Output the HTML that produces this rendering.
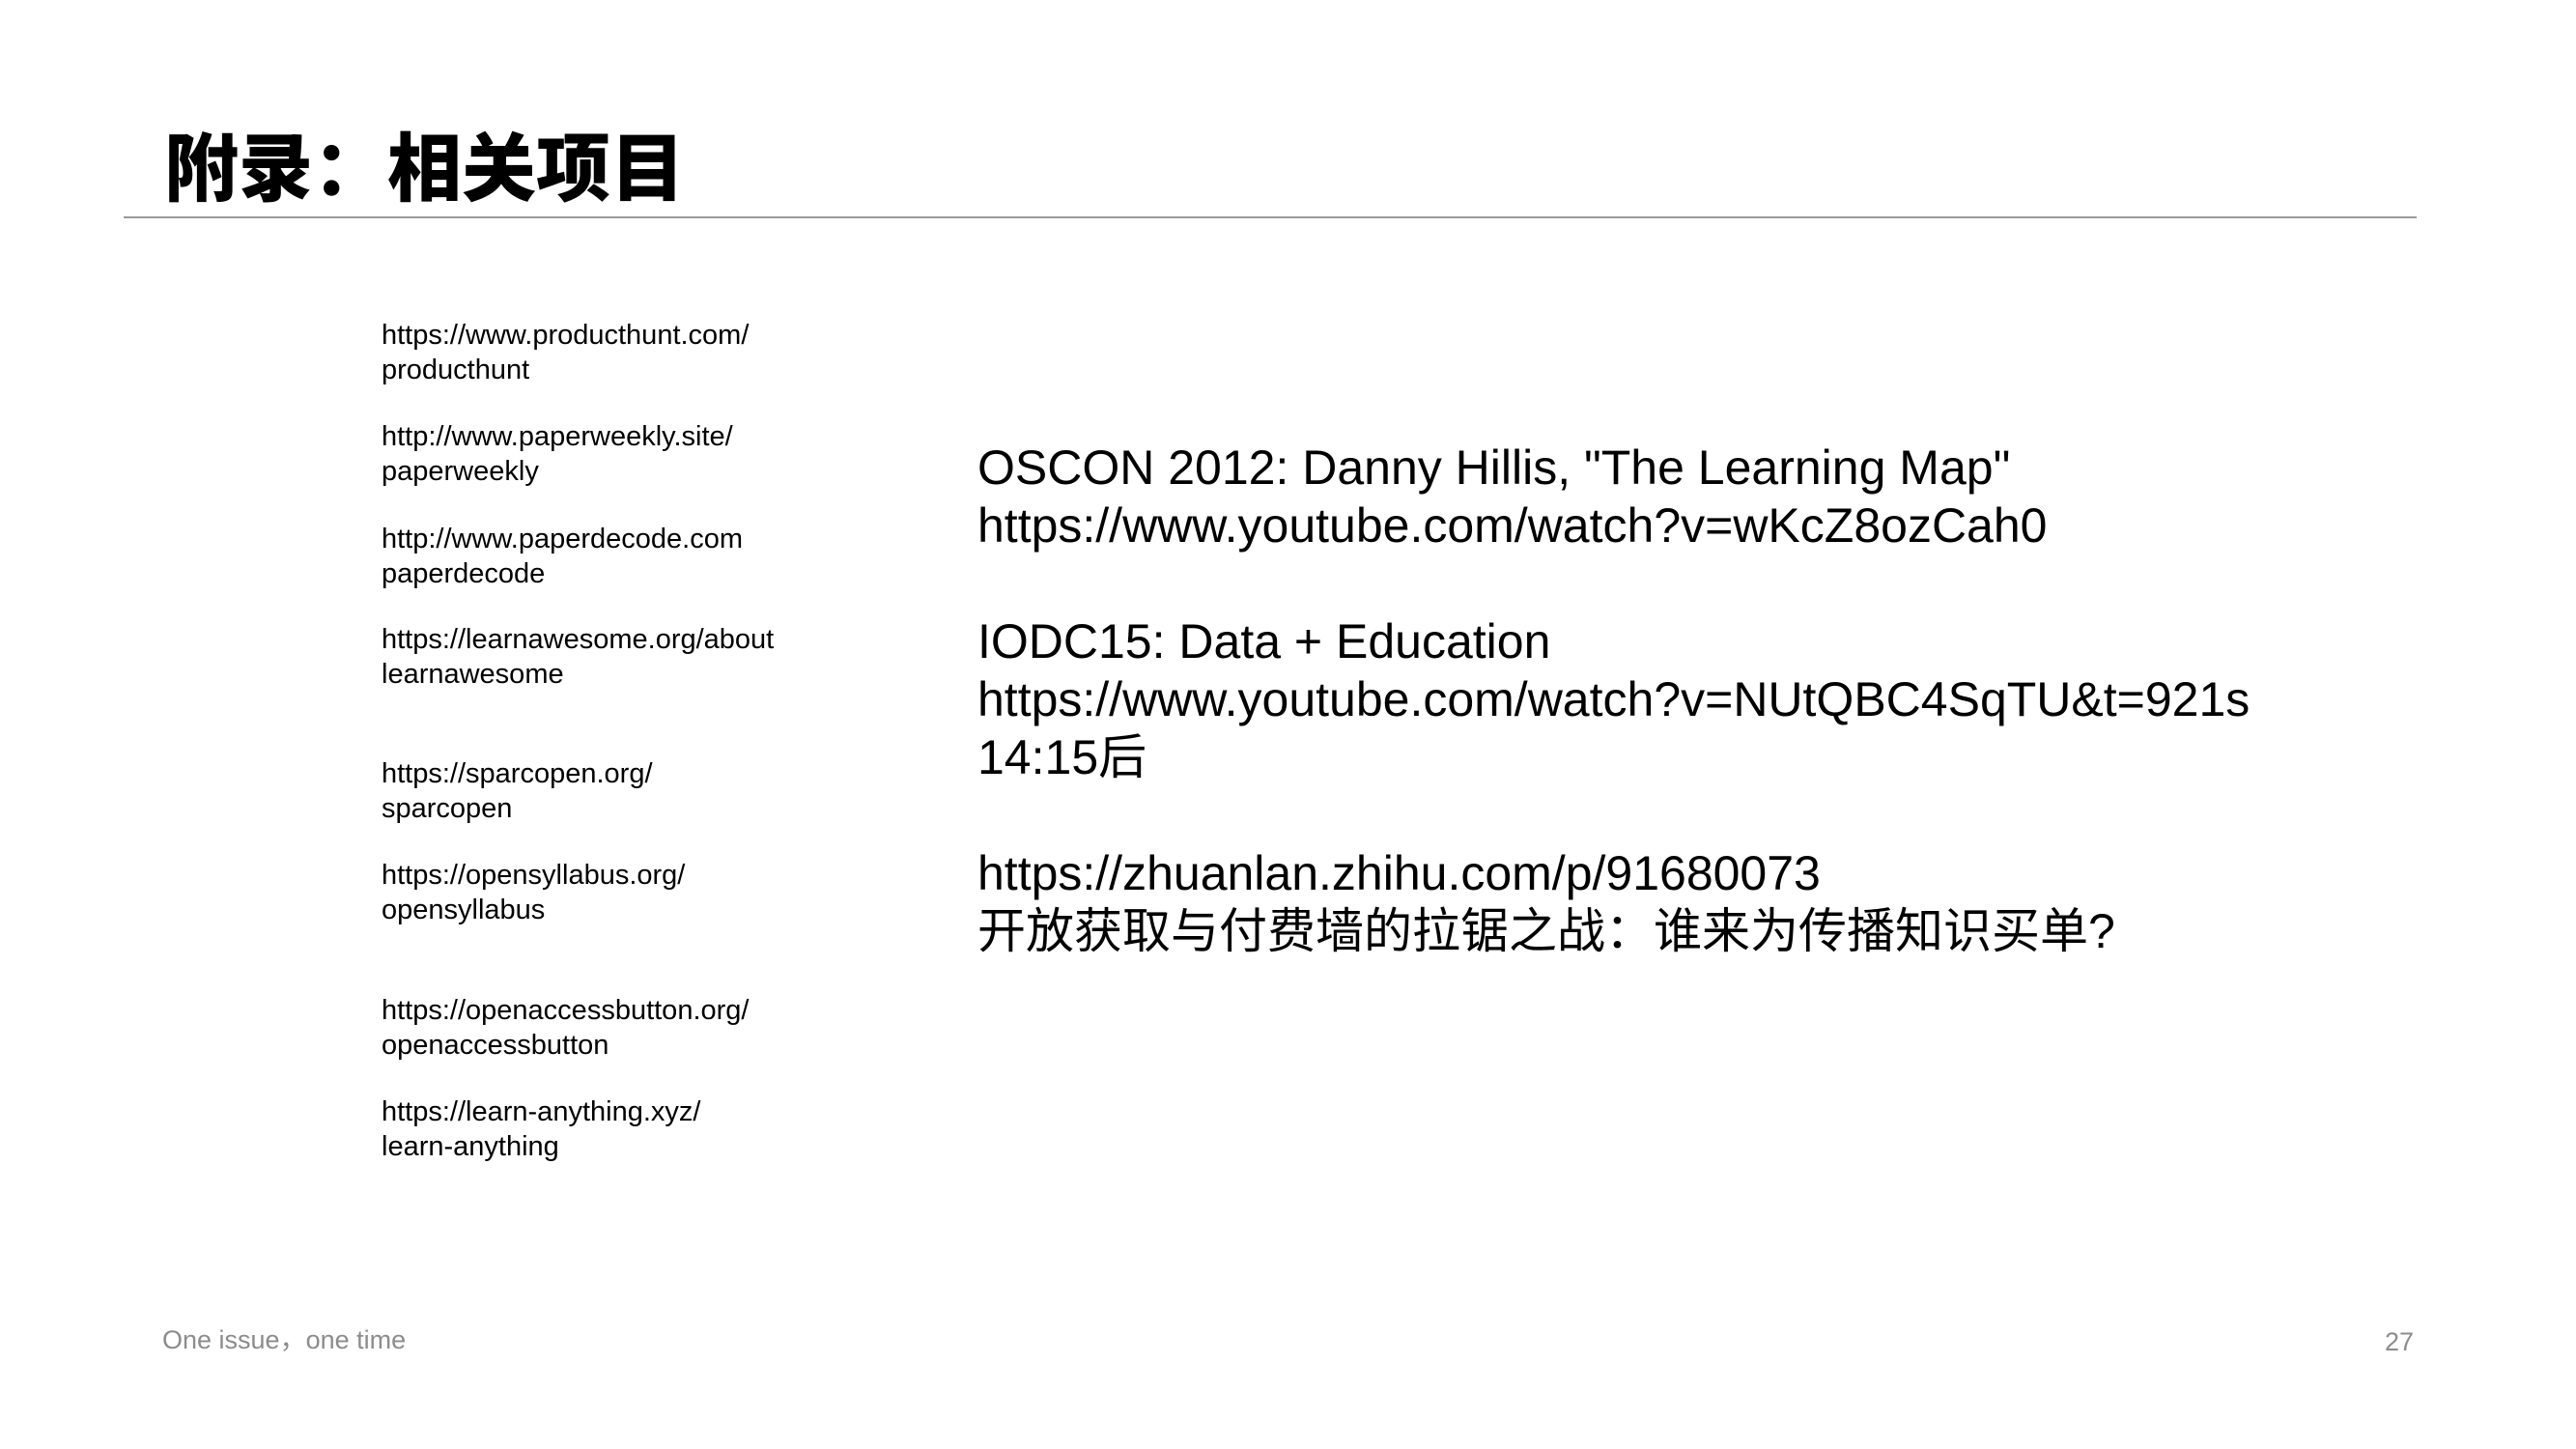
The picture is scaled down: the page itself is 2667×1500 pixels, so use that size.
<!DOCTYPE html>
<html><head><meta charset="utf-8"><style>
html,body{margin:0;padding:0;background:#fff;}
body{width:2667px;height:1500px;position:relative;overflow:hidden;font-family:"Liberation Sans","Noto Sans CJK SC",sans-serif;color:#000;}
.a{position:absolute;white-space:nowrap;}
.title{left:170px;top:124px;font-size:77px;line-height:92px;font-weight:900;font-family:"Noto Sans CJK SC","Liberation Sans",sans-serif;}
.rule{position:absolute;left:128px;top:224px;width:2374px;height:2px;background:#999;}
.l{left:395px;font-size:29px;line-height:36px;}
.r{left:1012px;top:454px;font-size:50px;line-height:60px;}
.f{color:#8c8c8c;font-size:27px;line-height:30px;}
</style></head><body>
<div class="a title">附录：相关项目</div>
<div class="rule"></div>
<div class="a l" style="top:329px">https://www.producthunt.com/<br>producthunt</div>
<div class="a l" style="top:434px">http://www.paperweekly.site/<br>paperweekly</div>
<div class="a l" style="top:540px">http://www.paperdecode.com<br>paperdecode</div>
<div class="a l" style="top:644px">https://learnawesome.org/about<br>learnawesome</div>
<div class="a l" style="top:783px">https://sparcopen.org/<br>sparcopen</div>
<div class="a l" style="top:888px">https://opensyllabus.org/<br>opensyllabus</div>
<div class="a l" style="top:1028px">https://openaccessbutton.org/<br>openaccessbutton</div>
<div class="a l" style="top:1133px">https://learn-anything.xyz/<br>learn-anything</div>
<div class="a r">OSCON 2012: Danny Hillis, "The Learning Map"<br>https://www.youtube.com/watch?v=wKcZ8ozCah0<br><br>IODC15: Data + Education<br>https://www.youtube.com/watch?v=NUtQBC4SqTU&amp;t=921s<br>14:15后<br><br>https://zhuanlan.zhihu.com/p/91680073<br>开放获取与付费墙的拉锯之战：谁来为传播知识买单?</div>
<div class="a f" style="left:168px;top:1372px">One issue，one time</div>
<div class="a f" style="left:2469px;top:1374px;font-size:27px">27</div>
</body></html>
